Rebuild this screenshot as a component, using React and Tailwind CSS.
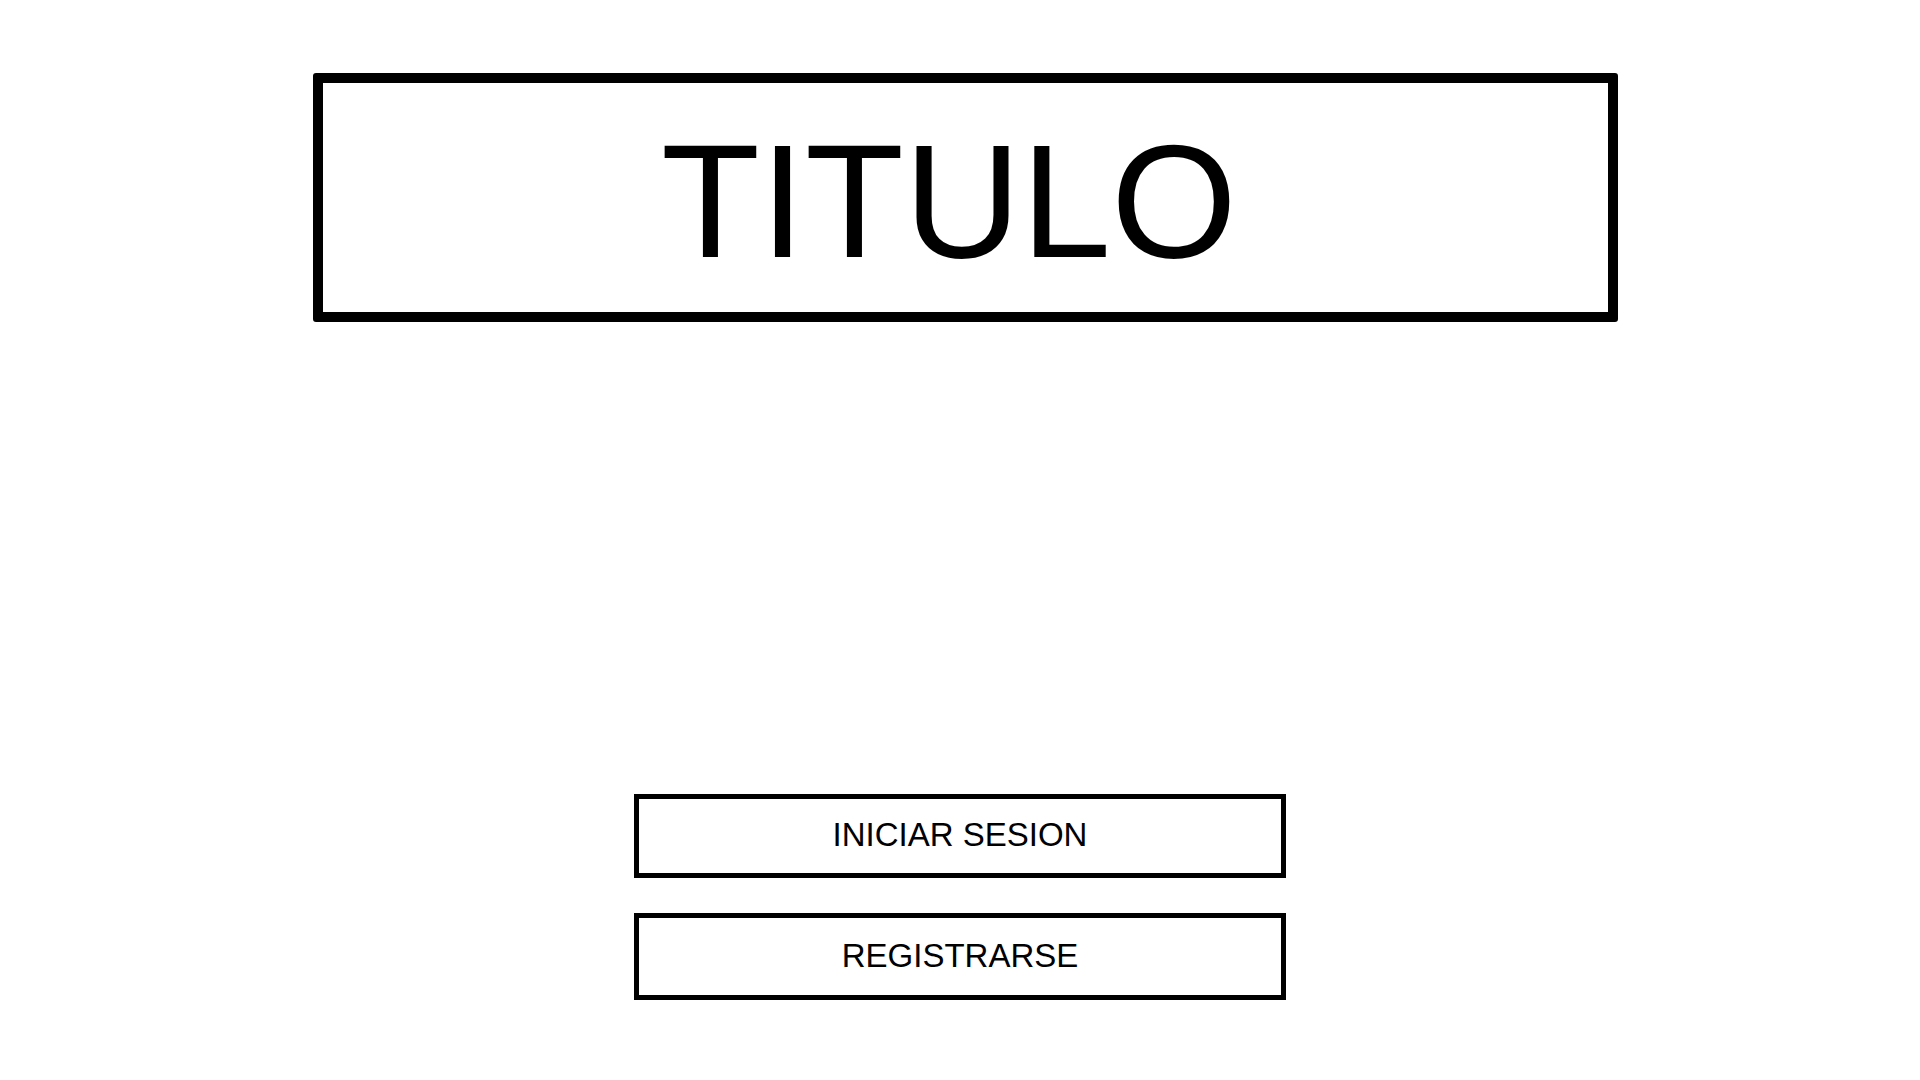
function App() {

    return (

        <div className="min-h-screen w-full bg-white flex flex-col items-center font-['Liberation_Sans',Arial,sans-serif] text-black">

            <div className="mt-[73px] ml-[11px] w-[1305px] h-[249px] border-[10px] border-black rounded-[3px] pt-[37px] pl-[338px]">

                <h1 className="text-[162px] leading-none font-normal whitespace-nowrap">
                    TITULO
                </h1>

            </div>

            <div className="mt-[472px] flex flex-col gap-[35px]">

                <button className="w-[652px] h-[84px] border-[5px] border-black bg-white text-[33px] leading-none flex items-center justify-center pb-[3px]">
                    INICIAR SESION
                </button>

                <button className="w-[652px] h-[87px] border-[5px] border-black bg-white text-[33px] leading-none flex items-center justify-center pb-[2px]">
                    REGISTRARSE
                </button>

            </div>

        </div>

    )

}

export default App
